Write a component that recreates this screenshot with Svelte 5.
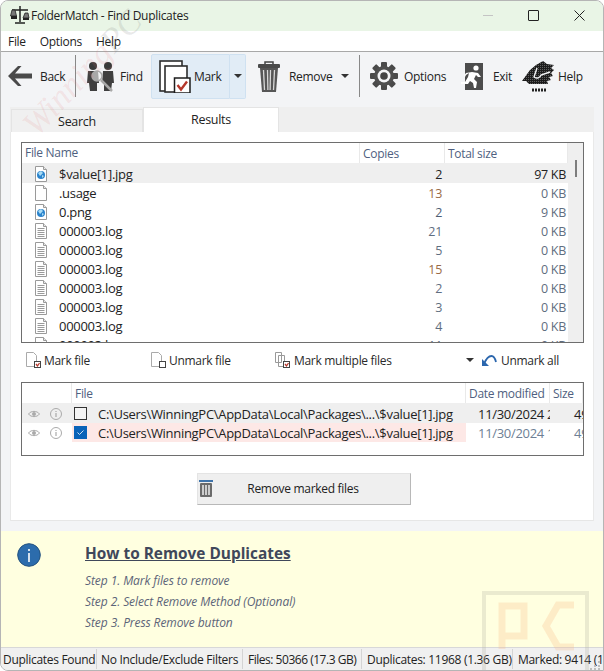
<script>
  const menus = ['File', 'Options', 'Help'];
  const files = [
    { name: '$value[1].jpg', kind: 'img', copies: '2', size: '97 KB', cc: '#222', sel: true },
    { name: '.usage', kind: 'blank', copies: '13', size: '0 KB', cc: '#9a6a45' },
    { name: '0.png', kind: 'img', copies: '2', size: '9 KB', cc: '#4d5d72' },
    { name: '000003.log', kind: 'log', copies: '21', size: '0 KB', cc: '#5f6e80' },
    { name: '000003.log', kind: 'log', copies: '5', size: '0 KB', cc: '#5f6e80' },
    { name: '000003.log', kind: 'log', copies: '15', size: '0 KB', cc: '#9a6a45' },
    { name: '000003.log', kind: 'log', copies: '2', size: '0 KB', cc: '#5f6e80' },
    { name: '000003.log', kind: 'log', copies: '3', size: '0 KB', cc: '#5f6e80' },
    { name: '000003.log', kind: 'log', copies: '4', size: '0 KB', cc: '#5f6e80' },
    { name: '000003.log', kind: 'log', copies: '11', size: '0 KB', cc: '#5f6e80' }
  ];
  const path = 'C:\\Users\\WinningPC\\AppData\\Local\\Packages\\...\\$value[1].jpg';
</script>

<div class="win">
  <header class="title">
    <svg class="logo" width="20" height="20" viewBox="0 0 20 20">
      <path d="M10 1v16M5 18h10M2 5h16" stroke="#222" stroke-width="1.5" fill="none" />
      <path d="M2 5l-1.500 6h6L5 5zM15 8l-2 5h6l-1-5z" fill="#777" stroke="#222" stroke-width=".8" />
      <rect x="1" y="11" width="6" height="3" fill="#222" />
      <rect x="13" y="13" width="6" height="2" fill="#222" />
    </svg>
    <span class="title-text">FolderMatch - Find Duplicates</span>
    <div class="caption">
      <span class="min"></span>
      <span class="max"></span>
      <svg width="11" height="11" viewBox="0 0 11 11"><path d="M.5.500l10 10M10.500.500l-10 10" stroke="#222" stroke-width="1" /></svg>
    </div>
  </header>

  <nav class="menu">
    {#each menus as m}<span>{m}</span>{/each}
  </nav>

  <div class="toolbar">
    <div class="tool back">
      <svg width="24" height="20" viewBox="0 0 24 20"><path d="M10 0L0 10l10 10h3.500L7 12.500h17v-5H7L13.500 0z" fill="#4a4a4a" /></svg>
      <span>Back</span>
    </div>
    <i class="sep"></i>
    <div class="tool find">
      <svg width="27" height="31" viewBox="0 0 27 31">
        <circle cx="6" cy="5" r="4" fill="#3a3a3a" />
        <circle cx="21" cy="5" r="4" fill="#3a3a3a" />
        <path d="M1 10h10l1 12h-2v8H3l-1-8H0zM16 10h10l1 12h-2l-1 8h-7l0-8h-2z" fill="#3f3f3f" />
        <circle cx="10" cy="15" r="5" fill="#eee" fill-opacity=".6" stroke="#a8a8a8" stroke-width="1.500" />
        <path d="M14 19l11 11" stroke="#a8a8a8" stroke-width="2.500" />
      </svg>
      <span>Find</span>
    </div>
    <div class="mark-group">
      <div class="tool mark">
        <svg width="32" height="33" viewBox="0 0 32 33">
          <rect x="1" y="1" width="22" height="30" fill="#fff" stroke="#2c2c2c" stroke-width="1.600" />
          <rect x="6" y="6" width="22" height="26" fill="#fff" stroke="#2c2c2c" stroke-width="1.600" />
          <rect x="15.500" y="18" width="15.500" height="15" fill="#fff" stroke="#1d1d1d" stroke-width="1.500" />
          <path d="M18.500 25l3.500 4.500L28 21.500" stroke="#b5382c" stroke-width="2.400" fill="none" />
        </svg>
        <span>Mark</span>
      </div>
      <div class="mark-drop"><b class="caret"></b></div>
    </div>
    <div class="tool remove">
      <svg width="22" height="31" viewBox="0 0 22 31">
        <path d="M7 3V1h8v2" stroke="#444" fill="none" stroke-width="1.500" />
        <rect x="0" y="3" width="22" height="4" rx="1" fill="#4a4a4a" />
        <path d="M2 7h18l-2 24H4z" fill="#565656" />
        <path d="M5.500 9l1 20M9.500 9l.4 20M12.500 9l-.4 20M16.500 9l-1 20" stroke="#d8d8d8" stroke-width="1.300" />
      </svg>
      <span>Remove</span>
      <b class="caret"></b>
    </div>
    <i class="sep"></i>
    <div class="tool options">
      <svg width="28" height="28" viewBox="0 0 28 28">
        <g fill="#4a4a4a">
          <rect x="11" y="0" width="6" height="28" rx="1" />
          <rect x="11" y="0" width="6" height="28" rx="1" transform="rotate(45 14 14)" />
          <rect x="11" y="0" width="6" height="28" rx="1" transform="rotate(90 14 14)" />
          <rect x="11" y="0" width="6" height="28" rx="1" transform="rotate(135 14 14)" />
        </g>
        <circle cx="14" cy="14" r="10" fill="#4f4f4f" />
        <circle cx="14" cy="14" r="6.500" fill="#f3f4f6" />
        <circle cx="14" cy="14" r="3.800" fill="#444" />
      </svg>
      <span>Options</span>
    </div>
    <div class="tool exit">
      <svg width="22" height="27" viewBox="0 0 22 27">
        <rect x="4" y="0" width="18" height="27" fill="#4c4c4c" />
        <circle cx="15" cy="5" r="2.600" fill="#fff" />
        <path d="M11 9l6 1 3 4h-3l-2-2-2 4 3 3-1 6h-2l-1-5-3-2-2 3H0v-2h4l3-5 1-4-3 2-1 2-1-1 2-3z" fill="#fff" />
      </svg>
      <span>Exit</span>
    </div>
    <div class="tool help">
      <svg width="32" height="31" viewBox="0 0 32 31">
        <defs>
          <pattern id="dots" width="2" height="2" patternUnits="userSpaceOnUse"><rect width="2" height="2" fill="#1c1c1c" /><rect width="1" height="1" fill="#5e5e5e" /></pattern>
        </defs>
        <path d="M0 20L8 9l6-5 7-4 4 3 7 1-3 3 3 2-3 3 2 3-4 1 2 3-4 1 1 3H7l-3-3z" fill="url(#dots)" />
        <path d="M15 7l-3 9c3 2 6 1 7-2l9-3" fill="none" stroke="#f3f4f6" stroke-width="1.400" />
        <path d="M10 29h14" stroke="#222" stroke-width="3" stroke-dasharray="2 1" />
      </svg>
      <span>Help</span>
    </div>
  </div>

  <div class="tabs">
    <span class="tab">Search</span>
    <span class="tab on">Results</span>
  </div>

  <section class="panel">
    <div class="list top">
      <div class="rows">
        <div class="head">
          <span class="c-name">File Name</span>
          <span class="c-copies">Copies</span>
          <span class="c-size">Total size</span>
        </div>
        {#each files as f}
          <div class="row" class:sel={f.sel}>
            <span class="c-name">
              <svg class="ficon" width="12" height="16" viewBox="0 0 12 16">
                <path d="M.5.500h8l3 3v12H.5z" fill="#fff" stroke="#9a9a9a" />
                <path d="M8.500.500v3h3" fill="#e8e8e8" stroke="#9a9a9a" />
                {#if f.kind === 'img'}
                  <circle cx="6" cy="9" r="4" fill="#2a83cc" />
                  <path d="M3 7l3-2 2 2-3 3zM7 9l2 1-2 2z" fill="#a9dcf5" />
                {:else if f.kind === 'log'}
                  <path d="M2.500 5.500h7M2.500 7.500h7M2.500 9.500h7M2.500 11.500h7M2.500 13.500h7" stroke="#9a9a9a" />
                {/if}
              </svg>
              <em>{f.name}</em>
            </span>
            <span class="c-copies num" style="color: {f.cc}">{f.copies}</span>
            <span class="c-size num" style="color: {f.sel ? '#222' : '#5f6e80'}">{f.size}</span>
          </div>
        {/each}
      </div>
      <div class="scroll"><i></i></div>
    </div>

    <div class="actions">
      <span class="act a1">
        <svg width="18" height="18" viewBox="0 0 18 18">
          <path d="M1.500 1.500h7l3 3v11h-10z" fill="#fff" stroke="#aaa" />
          <rect x="9.500" y="10.500" width="6" height="6" fill="#fff" stroke="#444" />
          <path d="M11 13l1.500 2 2-3" stroke="#b5382c" stroke-width="1.300" fill="none" />
        </svg>
        Mark file
      </span>
      <span class="act a2">
        <svg width="18" height="18" viewBox="0 0 18 18">
          <path d="M1.500 1.500h7l3 3v11h-10z" fill="#fff" stroke="#aaa" />
          <rect x="9.500" y="10.500" width="6" height="6" fill="#fff" stroke="#444" />
        </svg>
        Unmark file
      </span>
      <span class="act a3">
        <svg width="18" height="18" viewBox="0 0 18 18">
          <path d="M1.500 1.500h6v10h-6zM4.500 4.500h6v11h-6z" fill="#fff" stroke="#999" />
          <rect x="9.500" y="10.500" width="6" height="6" fill="#fff" stroke="#444" />
          <path d="M11 13l1.500 2 2-3" stroke="#b5382c" stroke-width="1.300" fill="none" />
        </svg>
        Mark multiple files
      </span>
      <b class="caret a4"></b>
      <span class="act a5">
        <svg width="16" height="14" viewBox="0 0 16 14">
          <path d="M3 11C5 6 8 3 10.500 3S14 5 15 9" fill="none" stroke="#2b66ad" stroke-width="1.800" />
          <path d="M1 6v7h7z" fill="#2b66ad" />
        </svg>
        Unmark all
      </span>
    </div>

    <div class="list bottom">
      <div class="head">
        <span class="d-icons"></span>
        <span class="d-file">File</span>
        <span class="d-date">Date modified</span>
        <span class="d-size">Size</span>
      </div>
      <div class="row grey">
        <span class="d-icons">
          <svg class="eye" width="12" height="8" viewBox="0 0 12 8"><path d="M.5 4C3 .500 9 .500 11.500 4 9 7.500 3 7.500.5 4z" fill="none" stroke="#aaa" /><circle cx="6" cy="4" r="2" fill="#aaa" /></svg>
          <svg width="12" height="12" viewBox="0 0 12 12"><circle cx="6" cy="6" r="5.500" fill="none" stroke="#aaa" /><path d="M6 5v4M6 3v1" stroke="#999" /></svg>
        </span>
        <span class="d-file path"><i class="check"></i><em>{path}</em></span>
        <span class="d-date">11/30/2024 2:51 PM</span>
        <span class="d-size">49 KB</span>
      </div>
      <div class="row">
        <span class="d-icons">
          <svg class="eye" width="12" height="8" viewBox="0 0 12 8"><path d="M.5 4C3 .500 9 .500 11.500 4 9 7.500 3 7.500.5 4z" fill="none" stroke="#aaa" /><circle cx="6" cy="4" r="2" fill="#aaa" /></svg>
          <svg width="12" height="12" viewBox="0 0 12 12"><circle cx="6" cy="6" r="5.500" fill="none" stroke="#aaa" /><path d="M6 5v4M6 3v1" stroke="#999" /></svg>
        </span>
        <span class="d-file path pink">
          <i class="check on">
            <svg width="13" height="13" viewBox="0 0 13 13"><path d="M3.500 6.500l2 2 4-4" fill="none" stroke="#cfe0f2" /></svg>
          </i><em>{path}</em>
        </span>
        <span class="d-date soft">11/30/2024 1:15 PM</span>
        <span class="d-size soft">49 KB</span>
      </div>
    </div>

    <button class="remove-btn">
      <svg width="14" height="17" viewBox="0 0 14 17">
        <rect x="0" y="0" width="14" height="2" fill="#3f74ab" />
        <rect x="1" y="3" width="12" height="14" rx="1" fill="#6b6b6b" />
        <path d="M4 5v10M7 5v10M10 5v10" stroke="#eee" stroke-width="1.500" />
      </svg>
      <span>Remove marked files</span>
    </button>
  </section>

  <section class="howto">
    <svg class="info" width="24" height="24" viewBox="0 0 24 24">
      <circle cx="12" cy="12" r="11.300" fill="#2c6cac" stroke="#24527f" />
      <path d="M12 10v9M12 6v2" stroke="#fff" stroke-width="1.600" />
    </svg>
    <div class="steps">
      <h2>How to Remove Duplicates</h2>
      <p>Step 1. Mark files to remove</p>
      <p>Step 2. Select Remove Method (Optional)</p>
      <p>Step 3. Press Remove button</p>
    </div>
  </section>

  <footer class="status">
    <span class="s1">Duplicates Found</span>
    <span class="s2">No Include/Exclude Filters</span>
    <span class="s3">Files: 50366 (17.3 GB)</span>
    <span class="s4">Duplicates: 11968 (1.36 GB)</span>
    <span class="s5">Marked: 9414 (1.03 GB)</span>
  </footer>

  <div class="wm-text">Winning<span>PC</span></div>
  <div class="wm-pc">
    <svg width="107" height="80" viewBox="0 0 107 80">
      <rect x="2" y="2" width="103" height="90" fill="none" stroke="#b5b5a5" stroke-opacity=".28" stroke-width="4" />
      <path d="M20 58V15h22v30H20" fill="none" stroke="#f7b98a" stroke-opacity=".28" stroke-width="7" />
      <path d="M92 14H76L64 35l12 21h16" fill="none" stroke="#f7b98a" stroke-opacity=".28" stroke-width="7" />
    </svg>
  </div>
  <svg class="grip" width="14" height="10" viewBox="0 0 14 10">
    <path d="M11 1h2v2h-2zM7 5h2v2H7zM11 5h2v2h-2zM3 8h2v2H3zM7 8h2v2H7zM11 8h2v2h-2z" fill="#bdbdbd" />
  </svg>
</div>

<style>
  :global(body) {
    margin: 0;
    background: #fff;
  }
  .win {
    position: relative;
    width: 604px;
    height: 671px;
    box-sizing: border-box;
    display: flex;
    flex-direction: column;
    overflow: hidden;
    border: 1px solid #b5b5b5;
    border-radius: 8px 8px 0 8px;
    background: #f3f4f6;
    font-family: "Open Sans", "Noto Sans", sans-serif;
    font-size: 12px;
    letter-spacing: -0.3px;
    color: #222;
  }
  .title {
    box-sizing: border-box;
    height: 30px;
    flex: none;
    display: flex;
    align-items: center;
    padding: 0 0 2px 9px;
    background: #e9f5e6;
  }
  .title-text {
    margin-left: 1px;
  }
  .caption {
    margin-left: auto;
    display: flex;
    align-items: center;
    gap: 35px;
    padding-right: 18px;
  }
  .min {
    width: 10px;
    height: 1px;
    background: #c4c4c4;
  }
  .max {
    width: 9px;
    height: 9px;
    border: 1px solid #222;
    border-radius: 1px;
  }
  .menu {
    height: 20px;
    flex: none;
    display: flex;
    align-items: center;
    gap: 14px;
    padding-left: 7px;
    background: #fff;
    border-bottom: 1px solid #a8a8a8;
  }
  .toolbar {
    box-sizing: border-box;
    height: 52px;
    padding-bottom: 4px;
    flex: none;
    display: flex;
    align-items: center;
    color: #222;
  }
  .tool {
    box-sizing: border-box;
    display: flex;
    align-items: center;
    height: 44px;
  }
  .sep {
    width: 1px;
    height: 42px;
    background: #888;
    flex: none;
  }
  .back {
    padding-left: 7px;
    gap: 8px;
    width: 74px;
  }
  .find {
    padding-left: 11px;
    gap: 6px;
    width: 75px;
  }
  .mark-group {
    display: flex;
    height: 45px;
    width: 95px;
    flex: none;
  }
  .mark {
    height: 45px;
    width: 80px;
    padding-left: 7px;
    gap: 3px;
    background: #e1ecf6;
    border: 1px solid #cfe1f1;
    border-radius: 2px 0 0 2px;
  }
  .mark-drop {
    width: 15px;
    display: flex;
    align-items: center;
    justify-content: center;
    background: #e1ecf6;
    border: 1px solid #cfe1f1;
    border-left: 0;
    border-radius: 0 2px 2px 0;
  }
  .caret {
    display: inline-block;
    width: 0;
    height: 0;
    border: 4px solid transparent;
    border-top: 4px solid #333;
    border-bottom: 0;
  }
  .remove {
    width: 113px;
    padding-left: 12px;
    gap: 9px;
  }
  .options {
    padding-left: 10px;
    gap: 6px;
    width: 91px;
  }
  .exit {
    padding-left: 10px;
    gap: 10px;
    width: 71px;
  }
  .help {
    gap: 4px;
  }
  .tabs {
    height: 25px;
    flex: none;
    margin: 3px 9px 0;
    display: flex;
    align-items: flex-end;
    background: #efefef;
    font-size: 12.500px;
  }
  .tab {
    box-sizing: border-box;
    width: 132px;
    height: 23px;
    margin-left: 1px;
    padding-top: 3px;
    text-align: center;
    background: #f0f0f0;
    border: 1px solid #e4e4e4;
    border-bottom: 0;
  }
  .tab.on {
    width: 136px;
    height: 25px;
    margin-left: 0;
    padding-top: 3px;
    background: #fff;
  }
  .panel {
    box-sizing: border-box;
    height: 389px;
    flex: none;
    margin: 0 9px;
    padding: 10px 10px 0 10px;
    background: #fff;
    border-bottom: 1px solid #e6e6e6;
    border-right: 1px solid #e9e9e9;
    border-left: 1px solid #e9e9e9;
    display: flex;
    flex-direction: column;
  }
  .list {
    box-sizing: border-box;
    width: 563px;
    border: 1px solid #6e6e6e;
    background: #fff;
    overflow: hidden;
    flex: none;
  }
  .list.top {
    height: 201px;
    display: flex;
  }
  .rows {
    width: 546px;
    flex: none;
  }
  .head {
    height: 21px;
    display: flex;
    align-items: center;
    box-sizing: border-box;
    border-bottom: 1px solid #efefef;
    color: #4f5f80;
  }
  .head span {
    box-sizing: border-box;
    height: 20px;
    line-height: 22px;
    padding-left: 3px;
    border-right: 1px solid #e9e9e9;
  }
  .row {
    display: flex;
    height: 19px;
    align-items: center;
    white-space: nowrap;
    font-size: 13px;
  }
  .row.sel {
    background: #efefef;
  }
  .c-name {
    width: 338px;
    flex: none;
    display: flex;
    align-items: center;
  }
  .ficon {
    margin-left: 13px;
  }
  .c-name em {
    font-style: normal;
    margin-left: 12px;
  }
  .c-copies {
    width: 85px;
    flex: none;
  }
  .c-size {
    width: 123px;
    flex: none;
  }
  .num {
    text-align: right;
    font-size: 12.500px;
    padding: 1px 2px 0 0;
    box-sizing: border-box;
  }
  .row .c-copies {
    padding-right: 3px;
  }
  .scroll {
    flex: 1;
    background: #efefef;
    position: relative;
  }
  .scroll i {
    position: absolute;
    left: 7px;
    top: 17px;
    width: 2px;
    height: 17px;
    background: #7d7d7d;
  }
  .actions {
    box-sizing: border-box;
    height: 39px;
    padding-bottom: 5px;
    flex: none;
    display: flex;
    align-items: center;
    color: #2a2a2a;
  }
  .act {
    display: flex;
    align-items: center;
    gap: 1px;
  }
  .a1 {
    margin-left: 4px;
    width: 125px;
  }
  .a2 {
    width: 124px;
  }
  .a3 {
    width: 192px;
    gap: 2px;
  }
  .a4 {
    margin-right: 7px;
  }
  .a5 {
    gap: 4px;
  }
  .list.bottom {
    height: 74px;
  }
  .d-icons {
    box-sizing: border-box;
    width: 50px;
    flex: none;
    display: flex;
    align-items: center;
    gap: 10px;
    padding-left: 6px !important;
    color: #888;
  }
  .d-file {
    width: 394px;
    flex: none;
  }
  .d-date {
    width: 84px;
    flex: none;
    overflow: hidden;
  }
  .d-size {
    width: 33px;
    flex: none;
    overflow: hidden;
  }
  .row .d-date {
    padding-left: 12px;
    box-sizing: border-box;
  }
  .row .d-size {
    padding-left: 24px;
    box-sizing: border-box;
  }
  .row.grey {
    background: #efefef;
  }
  .path {
    display: flex;
    align-items: center;
    height: 19px;
    padding-left: 2px;
    box-sizing: border-box;
  }
  .path em {
    font-style: normal;
  }
  .pink {
    background: #fde8e6;
  }
  .soft {
    color: #6e7f95;
  }
  .check {
    box-sizing: border-box;
    width: 13px;
    height: 13px;
    margin-right: 11px;
    border: 1px solid #333;
    background: #f4f4f4;
    flex: none;
  }
  .check.on {
    border: 0;
    background: #0a63b8;
    display: flex;
  }
  .remove-btn {
    align-self: flex-start;
    box-sizing: border-box;
    margin: 17px 0 0 176px;
    width: 214px;
    height: 32px;
    padding: 0 0 2px 1px;
    display: flex;
    align-items: center;
    font: inherit;
    letter-spacing: inherit;
    color: #222;
    background: #efefef;
    border: 1px solid #b8b8b8;
    border-top-color: #e4e4e4;
    border-left-color: #e4e4e4;
  }
  .remove-btn span {
    flex: 1;
    text-align: center;
    margin-right: 17px;
  }
  .howto {
    height: 116px;
    margin-top: 10px;
    flex: none;
    display: flex;
    background: #ffffe0;
    color: #4a5264;
  }
  .info {
    margin: 12px 0 0 16px;
  }
  .steps {
    margin: 13px 0 0 44px;
  }
  .steps h2 {
    margin: 0 0 9px;
    font-size: 15.400px;
    line-height: 20px;
    letter-spacing: 0;
    font-weight: 700;
    text-decoration: underline;
    color: #40475a;
  }
  .steps p {
    margin: 0 0 6px;
    font-style: italic;
    line-height: 15px;
    letter-spacing: -0.08px;
    color: #5c6478;
  }
  .status {
    height: 23px;
    flex: none;
    display: flex;
    align-items: center;
    white-space: nowrap;
    overflow: hidden;
    background: #f0f0f0;
    border-top: 1px solid #d8d8d8;
    box-sizing: border-box;
  }
  .status span {
    height: 20px;
    line-height: 22px;
    box-sizing: border-box;
    padding-left: 2px;
    border-right: 1px solid #d4d4d4;
    flex: none;
  }
  .s1 { width: 96px; }
  .s2 { width: 146px; padding-left: 4px !important; }
  .s3 { width: 119px; padding-left: 5px !important; letter-spacing: -0.48px; }
  .s4 { width: 151px; padding-left: 5px !important; }
  .s5 { width: 100px; padding-left: 5px !important; border: 0 !important; }
  .wm-text {
    position: absolute;
    left: 28px;
    top: 110px;
    transform: rotate(-47deg);
    transform-origin: 0 50%;
    white-space: nowrap;
    font-family: "Liberation Serif", serif;
    font-style: italic;
    font-size: 34px;
    letter-spacing: 0;
    color: rgba(230, 120, 120, 0.15);
    pointer-events: none;
  }
  .wm-text span {
    color: rgba(120, 120, 120, 0.16);
  }
  .wm-pc {
    position: absolute;
    left: 481px;
    top: 590px;
    pointer-events: none;
  }
  .grip {
    position: absolute;
    right: 2px;
    bottom: 0;
  }
</style>
